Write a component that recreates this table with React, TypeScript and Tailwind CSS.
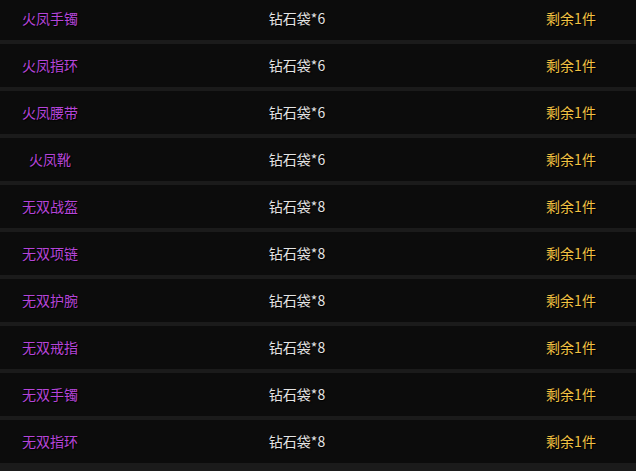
const rows = [
  { name: '火凤手镯', reward: '钻石袋*6' },
  { name: '火凤指环', reward: '钻石袋*6' },
  { name: '火凤腰带', reward: '钻石袋*6' },
  { name: '火凤靴', reward: '钻石袋*6' },
  { name: '无双战盔', reward: '钻石袋*8' },
  { name: '无双项链', reward: '钻石袋*8' },
  { name: '无双护腕', reward: '钻石袋*8' },
  { name: '无双戒指', reward: '钻石袋*8' },
  { name: '无双手镯', reward: '钻石袋*8' },
  { name: '无双指环', reward: '钻石袋*8' },
]

export default function App() {
  return (
    <div
      className="w-[636px] h-[471px] overflow-hidden bg-[#1b1b1b] text-[14px]"
      style={{ fontFamily: '"Noto Sans CJK SC", "Noto Sans", sans-serif' }}
    >
      <div className="flex flex-col gap-1 -mt-[3px]">
        {rows.map((r, i) => (
          <div key={i} className="flex items-center h-[43px] bg-[#0c0c0c] [text-shadow:1px_1px_1px_#000]">
            <span className="w-[100px] text-center text-[#b545d8]">{r.name}</span>
            <span className="w-[394px] text-center text-[#e4e4e4]">{r.reward}</span>
            <span className="ml-[12px] w-[130px] text-center text-[#f2c243]">剩余1件</span>
          </div>
        ))}
      </div>
    </div>
  )
}
